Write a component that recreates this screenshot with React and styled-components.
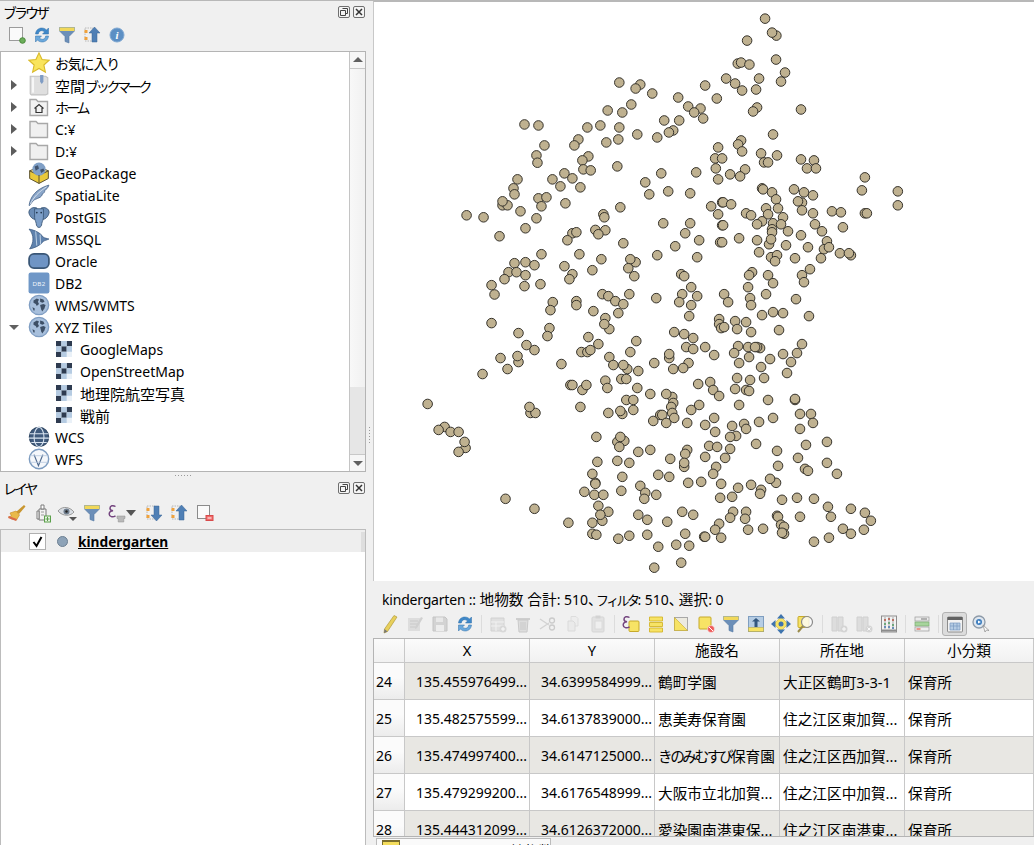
import React from "react";
import styled, { createGlobalStyle } from "styled-components";

const Global = createGlobalStyle`
  html, body { margin: 0; padding: 0; background: #f0f0f0; }
  body { font-family: "Noto Sans", "Noto Sans CJK JP", sans-serif; font-size: 14px; color: #000; }
  * { box-sizing: border-box; }
`;

const groups = [
  [420, 0, "596,242;659,248;645,260;695,275;854,251;889,290;773,287;632,308;803,314;840,320;821,332;848,350;605,332;561,326;731,356;776,356;311,368;353,371;500,377;539,371;596,377;650,398;710,407;758,386;745,392;473,413;461,431;593,413;557,422;371,431;893,437;347,461;350,483;503,464;485,476;884,470;488,503;510,506;590,494;886,500;431,515;722,515;827,512;395,533;455,530;893,533;290,533;278,560;419,554;479,557;674,542;743,569;686,578;809,575;281,578;353,590;377,587;245,611;260,611;245,599;362,614;434,605;599,617;872,614;905,602;893,638;299,629;548,638;551,647;137,641;188,647;347,650;728,665;809,665;905,671;314,680;524,685;554,686;533,698;455,695;467,692;440,716;794,695;236,704;836,716;899,722;608,725;764,734;362,758;476,758;710,761;830,767;542,773;645,782;629,773;281,785;314,782;341,791;431,794;623,800;515,806;263,812;287,812;455,818;314,821;641,824;782,818;791,824;251,833;446,833;212,851;311,854;359,848;812,857"],
  [720, 0, "134,50;168,101;155,92;80,116;167,173;52,185;62,182;87,188;194,212;17,230;116,230;44,245;182,239;65,266;107,263;110,317;98,329;242,323;158,398;62,416;53,428;65,449;122,455;170,461;5,470;131,482;143,482;242,473;281,476;260,500;287,500;74,503;434,527;29,518;59,524;125,560;128,563;155,572;221,563;251,572;278,581;425,566;533,569;167,593;245,603;233,599;8,602;32,608;533,611;137,620;173,620;77,635;92,641;143,638;245,626;278,635;335,629;362,632;434,635;440,635;188,647;125,659;110,668;158,665;182,668;8,671;284,668;368,677;155,683;155,692;203,689;305,689;242,701;56,710;146,728;152,713;110,716;5,722;320,719;197,731;263,737;311,743;326,737;116,752;359,755;392,761;386,755;152,767;170,761;224,770;302,770;164,779;269,803;95,812;86,821;143,821;245,821;251,842;158,845;83,857"],
  [420, 290, "221,9;396,32;467,29;467,41;389,56;545,8;563,14;626,8;584,29;608,38;707,20;518,59;593,65;212,95;554,80;566,113;551,98;386,110;293,125;380,134;503,137;647,149;317,161;533,158;341,176;482,182;500,182;509,176;629,182;239,200;293,212;290,194;566,197;578,221;620,233;608,221;701,215;422,218;260,233;653,239;185,248;554,268;602,263;617,263;449,281;455,281;485,296;497,281;560,290;650,290;689,308;20,338;617,326;638,326;329,365;344,365;326,347;479,347;563,365;605,368;599,359;638,356;698,389;719,371;71,407;53,416;89,422;113,422;134,470;131,452;113,482;527,437;590,452;611,449;599,437;596,467;653,482;689,476;530,512;590,509;626,515;515,548;605,557;713,551;524,575;524,578;659,584;491,602;602,599;521,611;548,611;674,605;671,623;707,611;533,644;254,623;341,653;563,662;545,689;539,671;653,671;680,686;515,695;443,695;515,728;527,731;593,743;626,734;680,731;713,767;701,830"],
  [660, 290, "65,8;110,14;191,8;56,32;92,41;203,32;269,20;272,41;317,8;407,23;86,74;305,71;338,62;368,65;446,74;176,83;224,89;257,92;176,98;182,110;191,107;230,113;41,122;71,128;98,140;272,122;356,116;77,167;98,173;134,167;299,170;290,167;233,164;263,167;284,167;425,158;26,200;26,188;161,191;221,185;266,197;368,188;410,185;329,203;84,215;236,215;392,212;302,227;38,233;68,230;380,245;230,260;269,266;311,260;113,278;149,272;224,293;257,296;266,299;158,296;35,317;17,308;38,335;176,314;323,326;404,326;404,323;236,341;32,347;92,356;116,341;5,371;35,365;41,380;17,395;80,395;161,380;134,401;338,380;419,368;452,368;458,395;296,392;251,398;215,404;257,413;419,413;164,422;227,434;209,437;437,461;500,452;287,458;146,464;170,467;209,473;350,479;80,476;74,488;134,497;194,500;413,500;29,503;71,527;71,515;500,515;353,524;167,527;434,533;443,539;530,548;158,548;26,557;83,575;122,572;182,578;347,575;329,563;233,590;272,581;302,596;299,608;179,620;215,617;365,626;410,620;461,623;503,647;572,653;614,665;632,689;65,662;98,671;218,662;257,662;350,674;353,677;209,680;254,683;419,677;512,677;20,692;176,698;362,701;164,716;371,707;263,716;308,713;548,713;611,716;74,728;371,728;365,725;572,728;131,737;134,737;182,740;506,740;461,752;47,761;86,764;62,815"],
];
const points = groups.flatMap(([ox, oy, s]) =>
  s.split(";").map((p) => {
    const [x, y] = p.split(",").map(Number);
    return [ox + x / 3, oy + y / 3];
  })
);

const I = ({ s = 20, children }) => (
  <svg width={s} height={s} viewBox="0 0 20 20" fill="none">{children}</svg>
);

const globeDots = (
  <g fill="#3d4f66">
    <path d="M5 6l3-2 2 1-1 2 1 2-2 2-1-2-2-1z" />
    <path d="M11 4l3 1 1 2-2 1-2-1z" />
    <path d="M11 10l3-1 2 1-1 3-2 3-1-2z" />
    <path d="M4 12l2 1 0 2-1 0z" />
  </g>
);
const epsilonMark = (
  <path d="M8.500 3.500C6 1.800 3 2.800 3 5.200c0 1.500 1.200 2.300 3 2.600-2.200.3-3.800 1.400-3.800 3.200 0 2.800 3.600 3.600 6.300 1.800" stroke="#74457f" strokeWidth="1.500" />
);

const Tree = {
  star: <I s={22}><path d="M10 .8l2.800 6 6.400.7-4.800 4.300 1.400 6.500L10 15l-5.800 3.300 1.400-6.500L.8 7.500l6.400-.7z" fill="#f9e45c" stroke="#d9b92a" /></I>,
  bookmark: <I s={22}><path d="M2 2h14l2 1.500V18l-2 1H3l-1-1z" fill="#dfdfdf" stroke="#c2c2c2" /><path d="M4.500 3v14" stroke="#f7f7f7" strokeWidth="2" /><path d="M11 1h3v6l-1.500 2L11 7z" fill="#7f9cc4" /></I>,
  home: <I s={20}><path d="M1 2.500h6l2 2h9.500v14H1z" fill="#f2f2f2" stroke="#a8a8a8" strokeWidth="1.400" /><path d="M5.500 11.500L10 7.500l4.500 4M7 11v4.500h6V11" stroke="#333" strokeWidth="1.200" /></I>,
  folder: <I s={20}><path d="M1 2.500h6l2 2h9.500v14H1z" fill="#f0f0f0" stroke="#a8a8a8" strokeWidth="1.400" /></I>,
  gpkg: <I s={22}><path d="M1.500 8L10 12l8.500-4v7L10 19.500 1.500 15z" fill="#e9c93a" stroke="#5c5230" strokeWidth=".9" /><path d="M1.500 8L10 4.500 18.500 8 10 12z" fill="#f4e189" stroke="#5c5230" strokeWidth=".9" /><circle cx="10" cy="6.500" r="6" fill="#7f9fc6" /><path d="M6 4l3-1 1 3-3 2zM11 7l3-1 1 2-3 2z" fill="#41546e" /><path d="M10 12v7.500" stroke="#5c5230" strokeWidth=".9" /></I>,
  feather: <I s={22}><path d="M1 19.500C2 12 7 4.500 19 1c-1 3-2.500 4-4 5 .5 1-.5 2.500-2 3 0 1.500-1.500 3-3 3.500-2 1-4 1.500-5 2.500-1.500 1.500-2.500 3-3.500 4.500z" fill="#8aa6c9" stroke="#4f6a8e" strokeWidth=".8" /><path d="M2 18.500C5 12 10 7 17 2.500" stroke="#e9eef5" strokeWidth=".7" /></I>,
  pg: <I s={22}><path d="M.8 6C.8 2 5 .8 8 1.800L8 12C5 13 1.500 10 .8 6z" fill="#6a8cb6" stroke="#3a5676" strokeWidth=".8" /><path d="M19.200 6C19.200 2 15 .8 12 1.800L12 12c3 1 6.500-2 7.200-6z" fill="#6a8cb6" stroke="#3a5676" strokeWidth=".8" /><path d="M6 2.500h8v8c0 2-1 3-1.500 5.500 0 2-1 3.500-2.500 3.500S7.500 18 7.500 16C7 13.500 6 12.500 6 10.500z" fill="#7c9ec8" stroke="#3a5676" strokeWidth=".8" /><circle cx="8" cy="6" r=".8" fill="#24384f" /><circle cx="12" cy="6" r=".8" fill="#24384f" /></I>,
  mssql: <I s={22}><path d="M1 1c5 1 10 3 13 7.500 1 .5 3 1 5 1.500-2 1-4 1.500-5 2-2 3-7 6-12.500 7 2-3 3-6 3-9S3.500 4 1 1z" fill="#5f82ad" stroke="#3f5d82" strokeWidth=".7" /><path d="M7 3l1 13M11 6l.5 9" stroke="#bcd0e6" strokeWidth=".9" /></I>,
  oracle: <I s={22}><rect x="1" y="3.500" width="18" height="13" rx="4.500" fill="#6f94c4" stroke="#3a5676" strokeWidth="1.600" /></I>,
  db2: <I s={22}><rect x=".5" y=".5" width="19" height="19" rx="2" fill="#6f97c7" /><text x="10" y="12.500" textAnchor="middle" fontSize="5.600" fill="#eef3fa" fontFamily="Liberation Sans" letterSpacing=".3">DB2</text></I>,
  globe: <I s={22}><circle cx="10" cy="10" r="8.800" fill="#a7bfdc" stroke="#7f9dc2" strokeWidth="1.200" />{globeDots}</I>,
  tile: <svg width="16" height="16" viewBox="0 0 3 3"><rect width="3" height="3" fill="#eaf1f8" /><path d="M0 0h1v1H0zM2 0h1v1H2zM1 1h1v1H1zM0 2h1v1H0z" fill="#2e3b50" /><path d="M1 0h1v1H1zM0 1h1v1H0zM2 1h1v1H2zM1 2h1v1H1z" fill="#b5cbe2" /></svg>,
  wcs: <I s={22}><circle cx="10" cy="10" r="8.800" fill="#3f5a7c" stroke="#2e4662" /><path d="M1.500 7h17M1 11h18M3 15h14" stroke="#d8e3ef" strokeWidth="1" /><ellipse cx="10" cy="10" rx="4.500" ry="8.800" stroke="#d8e3ef" /></I>,
  wfs: <I s={22}><circle cx="10" cy="10" r="8.800" fill="#f4f7fb" stroke="#7d9cc0" strokeWidth="1.300" /><path d="M5.500 6l4 10 4-10" stroke="#4f6a8e" strokeWidth="1.100" /><path d="M2 7h16M2 13h16" stroke="#b4c6dc" strokeWidth=".7" /></I>,
};

const refresh = (
  <I>
    <path d="M3.500 9c.3-3.700 3-6 6.300-6 2 0 3.500.8 4.700 2l2-2v6h-6l2-2c-.8-.8-1.700-1.300-2.800-1.300-1.800 0-3.200 1.300-3.400 3.300z" fill="#3f88c9" stroke="#2f6ea6" strokeWidth=".5" />
    <path d="M16.500 11c-.3 3.700-3 6-6.300 6-2 0-3.500-.8-4.700-2l-2 2v-6h6l-2 2c.8.800 1.700 1.300 2.800 1.300 1.800 0 3.200-1.300 3.400-3.300z" fill="#6aa8dc" stroke="#2f6ea6" strokeWidth=".5" />
  </I>
);
const funnel = (
  <I>
    <path d="M2.500 2.500h15V6L12 11.500V18l-4-1.500v-5L2.500 6z" fill="#6c8fb8" stroke="#557aa5" strokeWidth=".6" />
    <path d="M2.500 2.500h15V6h-15z" fill="#f1d85a" />
  </I>
);
const treeBox = (
  <g>
    <path d="M3 3h8v13H3z" stroke="#b8b8b8" strokeDasharray="1.500 1" />
    <rect x="2.500" y="5" width="3" height="3" fill="#f0a23c" />
    <rect x="2.500" y="12" width="3" height="3" fill="#f0a23c" />
  </g>
);
const collapse = <I>{treeBox}<path d="M12.500 2l5.500 6h-3v9h-5V8H7z" fill="#4f7fb5" stroke="#3b6595" strokeWidth=".5" /></I>;
const expand = <I>{treeBox}<path d="M12.500 18l5.500-6h-3V3h-5v9H7z" fill="#4f7fb5" stroke="#3b6595" strokeWidth=".5" /></I>;
const yellowBox = "#f7e365";
const Action = {
  addGroup: <I><rect x="2.500" y="2.500" width="13" height="13" fill="#fafafa" stroke="#9b9b9b" /><circle cx="15.500" cy="15.500" r="2.800" fill="#6cae5a" stroke="#4a8a3b" /></I>,
  info: <I><circle cx="10" cy="10" r="7" fill="#5c8fc4" stroke="#80a8d2" /><text x="10" y="14" textAnchor="middle" fontSize="11" fontWeight="700" fontStyle="italic" fill="#fff" fontFamily="Liberation Serif">i</text></I>,
  brush: <I><path d="M9 9L17 2l1.500 1.500L12 11z" fill="#c9962f" /><path d="M3 10l6-2 3.500 4-3 5-5-1-3-2 3-1z" fill="#e9b949" stroke="#c98a20" strokeWidth=".6" /><path d="M1.500 14l8 3" stroke="#d96a4a" strokeWidth="2" /></I>,
  addLayers: <I><path d="M7 6h7v11H7z" fill="#f2f2f2" stroke="#7b7b7b" /><path d="M9 2h3v4H9zM5 8h2v8H5z" fill="#fff" stroke="#7b7b7b" /><path d="M9 9h3M9 12h3" stroke="#9a9a9a" /><rect x="12.500" y="13" width="6" height="6" fill="#e8f2e4" stroke="#5aa04a" /><path d="M15.500 14v4M13.500 16h4" stroke="#5aa04a" /></I>,
  eye: <I><path d="M1 8c3-4 9-5 14-1l2 2c-3 4-11 5-16-1z" fill="#d8dde3" stroke="#9a9a9a" /><circle cx="9.500" cy="8.500" r="3" fill="#6d7c8c" /><circle cx="9.500" cy="8.500" r="1.200" fill="#222" /><path d="M12 14h8l-4 4z" fill="#555" /></I>,
  epsilon: <I>{epsilonMark}<path d="M10 13h8v2.500h-1.200V19h-5.600v-3.500H10z" fill="#b9b9b9" stroke="#8f8f8f" strokeWidth=".5" /></I>,
  caret: <svg width="10" height="6" viewBox="0 0 10 6"><path d="M0 0h10L5 6z" fill="#555" /></svg>,
  removeLayer: <I><rect x="3.500" y="2.500" width="12" height="13" fill="#fafafa" stroke="#8b8b8b" /><rect x="12" y="12.500" width="7" height="5" fill="#f06a6a" stroke="#d84a4a" /><path d="M13.500 15h4" stroke="#fff" /></I>,
  pencil: <I><path d="M14 1.500l3 1.500L7.500 17.500 4 19l.5-4z" fill="#e8d05c" stroke="#a68f2e" strokeWidth=".6" /><path d="M4 19l.5-4 3 2.500z" fill="#777" /></I>,
  multiEdit: <I><path d="M3 4h12v13H3z" fill="#d6d6d6" /><path d="M5 7h8M5 10h8M5 13h5" stroke="#bababa" /><path d="M16 3l2 1-6 10-2 1 0-2z" fill="#c4c4c4" /></I>,
  save: <I><path d="M3 3h12l2 2v12H3z" fill="#c9c9c9" stroke="#b4b4b4" /><rect x="6" y="3.500" width="7" height="4.500" fill="#e6e6e6" /><rect x="6" y="11" width="8" height="6" fill="#ededed" /></I>,
  addRow: <I><path d="M3 4h13v13H3z" fill="#dbdbdb" stroke="#c6c6c6" /><path d="M3 8h13M3 12h13M8 8v9" stroke="#f2f2f2" /><circle cx="15" cy="15" r="3.500" fill="#cfcfcf" /><path d="M15 13v4M13 15h4" stroke="#fff" /></I>,
  trash: <I><path d="M3 4h14v2H3z" fill="#c7c0c0" /><path d="M5 6h10l-1 12H6z" fill="#dcd6d6" stroke="#c2b8b8" /><path d="M8 8v8M10 8v8M12 8v8" stroke="#c2b8b8" /></I>,
  scissors: <I><path d="M2 5l9 6M2 15l9-6" stroke="#c8c8c8" strokeWidth="1.400" /><circle cx="14" cy="6.500" r="2.500" stroke="#bdbdbd" strokeWidth="1.300" /><circle cx="14" cy="13.500" r="2.500" stroke="#bdbdbd" strokeWidth="1.300" /></I>,
  copy: <I><path d="M8 2.500h5l2 2V12H8z" fill="#ececec" stroke="#d6d6d6" /><path d="M5 7h5l2 2v8H5z" fill="#e9e9e9" stroke="#d2d2d2" /></I>,
  paste: <I><rect x="4" y="3" width="12" height="15" rx="1" fill="#dedede" stroke="#cbcbcb" /><rect x="7.500" y="1.500" width="5" height="3" fill="#c9c9c9" /><rect x="7" y="7" width="7" height="8" fill="#efefef" stroke="#d2d2d2" /></I>,
  exprSelect: <I><rect x="8" y="7" width="10" height="10.500" rx="1" fill={yellowBox} stroke="#c6a92a" />{epsilonMark}</I>,
  selectAll: <I><path d="M3.500 3h13v4h-13zM3.500 8.500h13v4h-13zM3.500 14h13v4h-13z" fill={yellowBox} stroke="#d4b52b" strokeWidth=".9" /></I>,
  invert: <I><rect x="3.500" y="3.500" width="13" height="13" fill="#eceae0" stroke="#a8a8a8" /><path d="M3.500 3.500l13 13h-13z" fill={yellowBox} stroke="#c6a92a" strokeWidth=".6" /></I>,
  deselect: <I><rect x="3" y="3" width="12" height="12" rx="1" fill={yellowBox} stroke="#c6a92a" /><circle cx="15" cy="15" r="3.500" fill="#ef5b5b" stroke="#fff" strokeWidth=".5" /><path d="M13 13l4 4" stroke="#fff" /></I>,
  moveTop: <I><rect x="2.500" y="2.500" width="15" height="15" fill="#b6cde4" stroke="#7f9ec0" /><path d="M2.500 13.500h15v4h-15z" fill={yellowBox} stroke="#b5a23e" strokeWidth=".5" /><path d="M10 4l4 3.500h-2.500V13h-3V7.500H6z" fill="#33577f" /></I>,
  pan: <I><rect x="5" y="5" width="10" height="10" transform="rotate(45 10 10)" fill={yellowBox} stroke="#c6a92a" strokeWidth=".5" /><path d="M10 0l4 4.500H6zM10 20l-4-4.500h8zM0 10l4.500-4v8zM20 10l-4.500 4V6z" fill="#3f74ae" /><circle cx="10" cy="10" r="2.500" fill="#3f74ae" /></I>,
  zoomSel: <I><rect x="2" y="2.500" width="11" height="11" rx="1" fill={yellowBox} stroke="#c6a92a" /><circle cx="11" cy="8" r="5.500" fill="#fdfdfd" fillOpacity=".8" stroke="#8a8a8a" strokeWidth="1.200" /><path d="M7 12l-5 6" stroke="#9a8b4a" strokeWidth="2" /></I>,
  newCol: <I><path d="M3 3h5v14H3zM9 3h5v14H9z" fill="#d6d6d6" stroke="#c4c4c4" /><circle cx="15" cy="15" r="3.500" fill="#cacaca" /><path d="M15 13v4M13 15h4" stroke="#fff" /></I>,
  delCol: <I><path d="M3 3h5v14H3zM9 3h5v14H9z" fill="#d6d6d6" stroke="#c4c4c4" /><circle cx="15" cy="15" r="3.500" fill="#cacaca" /><path d="M13.500 13.500l3 3M16.500 13.500l-3 3" stroke="#fff" /></I>,
  calc: <I><rect x="2.500" y="2" width="15" height="16" fill="#f2f2f2" stroke="#8d8d8d" /><path d="M3 15.500h14v2H3z" fill="#8c8c8c" /><path d="M6 3v12M10 3v12M14 3v12" stroke="#a9a9a9" /><path d="M5 6h2M9 5h2M13 6h2" stroke="#b2503f" strokeWidth="1.600" /><path d="M5 10h2M9 9h2M13 11h2" stroke="#4f9a62" strokeWidth="1.600" /><path d="M5 13h2M9 13h2M13 14h2" stroke="#4a78b0" strokeWidth="1.600" /></I>,
  cond: <I><rect x="3" y="3" width="14" height="4" fill="#ececec" stroke="#9a9a9a" strokeWidth=".7" /><rect x="3" y="8" width="14" height="4" fill="#a7d49c" stroke="#7aaa70" strokeWidth=".7" /><rect x="3" y="13" width="14" height="4" fill="#efefef" stroke="#9a9a9a" strokeWidth=".7" /><path d="M4.500 15h4" stroke="#e25a4a" strokeWidth="1.200" /><path d="M9 5h6" stroke="#777" /></I>,
  dock: <I><rect x="2.500" y="3" width="15" height="15" rx="1" fill="#f2f2f2" stroke="#8d8d8d" /><path d="M2.500 3h15v3h-15z" fill="#616161" /><path d="M5 9h10v7H5z" fill="#b5cce4" stroke="#7a9ac0" strokeWidth=".7" /><path d="M8.500 9v7M12 9v7M5 12h10" stroke="#7a9ac0" strokeWidth=".7" /></I>,
  organize: <I><circle cx="9" cy="8" r="6" fill="#dfe7f0" stroke="#8d9aa8" strokeWidth="1.300" /><circle cx="9" cy="8" r="3" fill="#3f7fbf" /><path d="M8 6.500l3 1.500-3 1.500z" fill="#fff" /><path d="M13 11l2 7 1.500-2 2.500.5z" fill="#fafafa" stroke="#8a8a8a" strokeWidth=".7" /></I>,
};

const Page = styled.div`
  width: 1034px;
  height: 845px;
  overflow: hidden;
  display: grid;
  grid-template-columns: 366px 7px 1fr;
  background: #f0f0f0;
  border-top: 1px solid #b8b8b8;
`;
const LeftColumn = styled.div`
  display: flex;
  flex-direction: column;
  height: 844px;
  min-width: 0;
`;
const Dock = styled.section`
  display: flex;
  flex-direction: column;
  flex: ${(p) => p.$flex};
  min-height: 0;
`;
const DockTitle = styled.div`
  height: 20px;
  display: flex;
  align-items: center;
  justify-content: space-between;
  padding: 0 1px 0 3px;
  margin-top: ${(p) => p.$top}px;
  font-size: 14px;
`;
const Kana = styled.span`
  font-size: ${(p) => p.$size || 14}px;
  letter-spacing: ${(p) => p.$ls || 0}px;
`;
const DockButtons = styled.div`
  display: flex;
  gap: 3px;
`;
const DockButton = styled.span`
  width: 12px;
  height: 12px;
  border: 1px solid #6f6f6f;
  border-radius: 2px;
  display: flex;
  align-items: center;
  justify-content: center;
  background: #f4f4f4;
`;
const Toolbar = styled.div`
  display: flex;
  align-items: center;
  height: ${(p) => p.$h || 22}px;
  padding-left: ${(p) => p.$left}px;
  margin: ${(p) => p.$margin || "0"};
`;
const Tool = styled.span`
  width: 25px;
  height: 22px;
  flex: none;
  display: flex;
  align-items: center;
  justify-content: center;
  ${(p) => p.$off && "opacity: .72; filter: grayscale(1);"}
`;
const ToolPressed = styled(Tool)`
  height: 24px;
  background: #dcdcdc;
  border: 1px solid #b2b2b2;
  border-radius: 3px;
`;
const Caret = styled.span`
  width: 15px;
  margin-left: -3px;
  display: flex;
`;
const ToolSep = styled.span`
  width: 8px;
  flex: none;
  display: flex;
  justify-content: center;
  &::before {
    content: "";
    width: 1px;
    height: 18px;
    background: #dcdcdc;
  }
`;
const TreeFrame = styled.div`
  flex: 1;
  min-height: 0;
  margin-top: 5px;
  display: flex;
  background: #fff;
  border: 1px solid #b4b4b4;
`;
const TreeList = styled.div`
  flex: 1;
  min-width: 0;
  overflow: hidden;
`;
const TreeRow = styled.div`
  height: 22px;
  display: flex;
  align-items: center;
  padding-left: ${(p) => p.$depth * 25}px;
  white-space: nowrap;
`;
const Arrow = styled.span`
  width: 26px;
  flex: none;
  display: flex;
  justify-content: center;
`;
const TreeIcon = styled.span`
  width: 24px;
  flex: none;
  display: flex;
  align-items: center;
  justify-content: center;
`;
const TreeLabel = styled.span`
  margin-left: 4px;
  font-size: 14px;
`;
const ScrollBar = styled.div`
  width: 16px;
  flex: none;
  display: flex;
  flex-direction: column;
  border-left: 1px solid #c4c4c4;
`;
const ScrollButton = styled.div`
  height: 17px;
  flex: none;
  display: flex;
  align-items: center;
  justify-content: center;
  background: #f6f6f6;
  border-${(p) => p.$edge}: 1px solid #c8c8c8;
`;
const ScrollThumb = styled.div`
  flex: 1;
  background: linear-gradient(90deg, #f8f8f8, #f1f1f1);
`;
const ScrollTrack = styled.div`
  height: 67px;
  flex: none;
  background: #e6e6e6;
`;
const DragDots = styled.div`
  height: 7px;
  display: flex;
  align-items: center;
  justify-content: center;
  gap: 2px;
`;
const Dot = styled.i`
  width: 1px;
  height: 1px;
  background: #9a9a9a;
`;
const LayerFrame = styled.div`
  flex: 1;
  margin-top: 5px;
  background: #fff;
  border: 1px solid #bcbcbc;
  border-bottom: 0;
`;
const LayerRow = styled.div`
  height: 22px;
  display: flex;
  align-items: center;
  background: #eeeeee;
  padding-left: 28px;
  gap: 11px;
  position: relative;
  font-weight: 700;
  &::after {
    content: "";
    position: absolute;
    right: 0;
    top: 2px;
    bottom: 0;
    width: 4px;
    background: #dedede;
  }
`;
const Check = styled.span`
  width: 17px;
  height: 17px;
  background: #fff;
  border: 1px solid #b0b0b0;
  display: flex;
  align-items: center;
  justify-content: center;
`;
const LayerDot = styled.span`
  width: 11px;
  height: 11px;
  border-radius: 50%;
  background: #8ea3b8;
  border: 1px solid #6c7f92;
`;
const LayerName = styled.span`
  margin-left: -1px;
  text-decoration: underline;
  font-size: 13.7px;
`;
const Splitter = styled.div`
  display: flex;
  flex-direction: column;
  align-items: center;
  justify-content: center;
  gap: 2px;
  transform: translateY(12px);
`;
const RightColumn = styled.div`
  display: flex;
  flex-direction: column;
  min-width: 0;
  height: 844px;
`;
const MapCanvas = styled.svg`
  display: block;
  width: 661px;
  height: 580px;
  flex: none;
  background: #fff;
  border-top: 1px solid #b8b8b8;
  border-left: 1px solid #c8c8c8;
`;
const AttrPanel = styled.div`
  flex: 1;
  min-height: 0;
  display: flex;
  flex-direction: column;
  background: #f0f0f0;
`;
const AttrTitle = styled.div`
  height: 28px;
  padding: 8px 0 0 9px;
  font-size: 14px;
  line-height: 20px;
  white-space: nowrap;
`;
const Table = styled.div`
  height: 199px;
  overflow: hidden;
  border-top: 1px solid #b4b4b4;
  border-left: 1px solid #b4b4b4;
  border-bottom: 1px solid #b4b4b4;
  font-size: 14px;
`;
const TableRow = styled.div`
  display: grid;
  grid-template-columns: 31px repeat(4, 125px) 1fr;
  height: ${(p) => p.$h}px;
  border-bottom: 1px solid #c8c8c8;
  background: ${(p) => (p.$alt ? "#e8e7e3" : "#fff")};
`;
const HeaderCell = styled.div`
  display: flex;
  align-items: center;
  justify-content: center;
  background: linear-gradient(#fbfbfb, #f1f1f1);
  border-right: 1px solid #c8c8c8;
  padding-bottom: 2px;
  font-size: 14.67px;
`;
const NumCell = styled.div`
  display: flex;
  align-items: center;
  padding-left: 2px;
  background: linear-gradient(#fbfbfb 40%, #ececec);
  border-right: 1px solid #c8c8c8;
`;
const Cell = styled.div`
  display: flex;
  align-items: center;
  justify-content: ${(p) => (p.$num ? "flex-end" : "flex-start")};
  padding: 0 2px 0 3px;
  border-right: 1px solid #c8c8c8;
  white-space: nowrap;
  overflow: hidden;
  font-size: ${(p) => (p.$num ? 14 : 14.67)}px;
`;
const TabStrip = styled.div`
  flex: 1;
  min-height: 0;
  padding: 1px 0 0 3px;
  overflow: hidden;
`;
const Tab = styled.div`
  width: 175px;
  height: 24px;
  background: #fafafa;
  border: 1px solid #bcbcbc;
  border-bottom: 0;
  display: flex;
  align-items: flex-start;
  gap: 10px;
  padding: 0 0 0 5px;
  white-space: nowrap;
  overflow: hidden;
`;
const TabIcon = styled.span`
  width: 18px;
  height: 16px;
  flex: none;
  background: #f4dd5c;
  border: 1px solid #7a6d2c;
  border-top-width: 2px;
  margin-top: 1px;
`;
const TabText = styled.span`
  margin-top: 1px;
  font-size: 14px;
`;

const K = 14.67;
const treeRows = [
  { id: "fav", d: 0, i: "star", t: <Kana $size={14} $ls={-1.2}>お気に入り</Kana> },
  { id: "bm", d: 0, a: "r", i: "bookmark", t: <><Kana $size={15}>空間</Kana><Kana $ls={-3.3}>ブックマーク</Kana></> },
  { id: "home", d: 0, a: "r", i: "home", t: <Kana $ls={-3}>ホーム</Kana> },
  { id: "c", d: 0, a: "r", i: "folder", t: "C:¥" },
  { id: "d", d: 0, a: "r", i: "folder", t: "D:¥" },
  { id: "gpkg", d: 0, i: "gpkg", t: "GeoPackage" },
  { id: "sl", d: 0, i: "feather", t: "SpatiaLite" },
  { id: "pg", d: 0, i: "pg", t: "PostGIS" },
  { id: "ms", d: 0, i: "mssql", t: "MSSQL" },
  { id: "or", d: 0, i: "oracle", t: "Oracle" },
  { id: "db", d: 0, i: "db2", t: "DB2" },
  { id: "wms", d: 0, i: "globe", t: "WMS/WMTS" },
  { id: "xyz", d: 0, a: "d", i: "globe", t: "XYZ Tiles" },
  { id: "gm", d: 1, i: "tile", t: "GoogleMaps" },
  { id: "osm", d: 1, i: "tile", t: "OpenStreetMap" },
  { id: "gsi", d: 1, i: "tile", t: <Kana $size={15}>地理院航空写真</Kana> },
  { id: "old", d: 1, i: "tile", t: <Kana $size={15}>戦前</Kana> },
  { id: "wcs", d: 0, i: "wcs", t: "WCS" },
  { id: "wfs", d: 0, i: "wfs", t: "WFS" },
];

const attrTools = [
  ["pencil"], ["multiEdit", 1], ["save", 1], ["refresh"], 0,
  ["addRow", 1], ["trash", 1], ["scissors", 1], ["copy", 1], ["paste", 1], 0,
  ["exprSelect"], ["selectAll"], ["invert"], ["deselect"], ["funnel"], ["moveTop"], ["pan"], ["zoomSel"], 0,
  ["newCol", 1], ["delCol", 1], ["calc"], 0, ["cond"], 0,
];
const allIcons = { ...Action, refresh, funnel };

const rows = [
  ["24", "135.455976499...", "34.6399584999...", "鶴町学園", "大正区鶴町3-3-1", "保育所"],
  ["25", "135.482575599...", "34.6137839000...", "恵美寿保育園", "住之江区東加賀...", "保育所"],
  ["26", "135.474997400...", "34.6147125000...", <><Kana $size={K} $ls={-2.5}>きのみむすび</Kana>保育園</>, "住之江区西加賀...", "保育所"],
  ["27", "135.479299200...", "34.6176548999...", "大阪市立北加賀...", "住之江区中加賀...", "保育所"],
  ["28", "135.444312099...", "34.6126372000...", "愛染園南港東保...", "住之江区南港東...", "保育所"],
];

const DockIcons = () => (
  <DockButtons>
    <DockButton>
      <svg width="8" height="8" viewBox="0 0 8 8" fill="none" stroke="#444"><path d="M2.500.5h5v5h-2M.5 2.500h5v5h-5z" /></svg>
    </DockButton>
    <DockButton>
      <svg width="8" height="8" viewBox="0 0 8 8" stroke="#333" strokeWidth="1.500"><path d="M1 1l6 6M7 1L1 7" /></svg>
    </DockButton>
  </DockButtons>
);
const Tri = ({ dir }) => (
  <svg width="10" height="10" viewBox="0 0 10 10">
    <path d={{ r: "M2 0L8 5 2 10z", d: "M0 3h10L5 8z", u: "M0 7h10L5 2z" }[dir]} fill={dir === "r" ? "#5d5d5d" : "#606060"} />
  </svg>
);

export default function App() {
  return (
    <>
      <Global />
      <Page>
        <LeftColumn>
          <Dock $flex="0 0 471px">
            <DockTitle $top={1}><Kana $ls={-3}>ブラウザ</Kana><DockIcons /></DockTitle>
            <Toolbar $left={4} $margin="2px 0 0">
              <Tool>{Action.addGroup}</Tool>
              <Tool>{refresh}</Tool>
              <Tool>{funnel}</Tool>
              <Tool>{collapse}</Tool>
              <Tool>{Action.info}</Tool>
            </Toolbar>
            <TreeFrame>
              <TreeList>
                {treeRows.map((r) => (
                  <TreeRow key={r.id} $depth={r.d}>
                    <Arrow>{r.a && <Tri dir={r.a} />}</Arrow>
                    <TreeIcon>{Tree[r.i]}</TreeIcon>
                    <TreeLabel>{r.t}</TreeLabel>
                  </TreeRow>
                ))}
              </TreeList>
              <ScrollBar>
                <ScrollButton $edge="bottom"><Tri dir="u" /></ScrollButton>
                <ScrollThumb />
                <ScrollTrack />
                <ScrollButton $edge="top"><Tri dir="d" /></ScrollButton>
              </ScrollBar>
            </TreeFrame>
          </Dock>
          <DragDots>{[0, 1, 2, 3, 4, 5].map((n) => <Dot key={n} />)}</DragDots>
          <Dock $flex="1">
            <DockTitle $top={-1}><Kana $ls={-3}>レイヤ</Kana><DockIcons /></DockTitle>
            <Toolbar $left={4} $margin="4px 0 0">
              <Tool>{Action.brush}</Tool>
              <Tool>{Action.addLayers}</Tool>
              <Tool>{Action.eye}</Tool>
              <Tool>{funnel}</Tool>
              <Tool>{Action.epsilon}</Tool>
              <Caret>{Action.caret}</Caret>
              <Tool>{expand}</Tool>
              <Tool>{collapse}</Tool>
              <Tool>{Action.removeLayer}</Tool>
            </Toolbar>
            <LayerFrame>
              <LayerRow>
                <Check>
                  <svg width="13" height="13" viewBox="0 0 13 13" fill="none" stroke="#000" strokeWidth="2"><path d="M2.500 7l3 4 5-9" /></svg>
                </Check>
                <LayerDot />
                <LayerName>kindergarten</LayerName>
              </LayerRow>
            </LayerFrame>
          </Dock>
        </LeftColumn>
        <Splitter>{[0, 1, 2, 3, 4, 5].map((n) => <Dot key={n} />)}</Splitter>
        <RightColumn>
          <MapCanvas viewBox="373 0 661 580">
            {points.map(([x, y], n) => (
              <circle key={n} cx={x} cy={y} r="4.800" fill="#bfb190" stroke="#35322b" strokeWidth="1" />
            ))}
          </MapCanvas>
          <AttrPanel>
            <AttrTitle>
              <Kana $ls={-0.2}>kindergarten ::</Kana> <Kana $size={K}>地物数 合計</Kana>: 510<Kana $ls={-6}>、</Kana><Kana $size={13} $ls={-2.6}>フィルタ</Kana>: 510<Kana $ls={-4}>、</Kana><Kana $size={K}>選択</Kana>: 0
            </AttrTitle>
            <Toolbar $left={4} $h={29}>
              {attrTools.map((t, n) =>
                t === 0 ? <ToolSep key={n} /> : <Tool key={n} $off={t[1]}>{allIcons[t[0]]}</Tool>
              )}
              <ToolPressed>{Action.dock}</ToolPressed>
              <Tool>{Action.organize}</Tool>
            </Toolbar>
            <Table>
              <TableRow $h={24}>
                <HeaderCell />
                {["X", "Y", "施設名", "所在地", "小分類"].map((h) => <HeaderCell key={h}>{h}</HeaderCell>)}
              </TableRow>
              {rows.map((r, n) => (
                <TableRow key={r[0]} $h={37} $alt={n % 2 === 0}>
                  <NumCell>{r[0]}</NumCell>
                  <Cell $num>{r[1]}</Cell>
                  <Cell $num>{r[2]}</Cell>
                  <Cell>{r[3]}</Cell>
                  <Cell>{r[4]}</Cell>
                  <Cell>{r[5]}</Cell>
                </TableRow>
              ))}
            </Table>
            <TabStrip>
              <Tab>
                <TabIcon />
                <TabText>kindergarten :: 地物数 合計: 510</TabText>
              </Tab>
            </TabStrip>
          </AttrPanel>
        </RightColumn>
      </Page>
    </>
  );
}
